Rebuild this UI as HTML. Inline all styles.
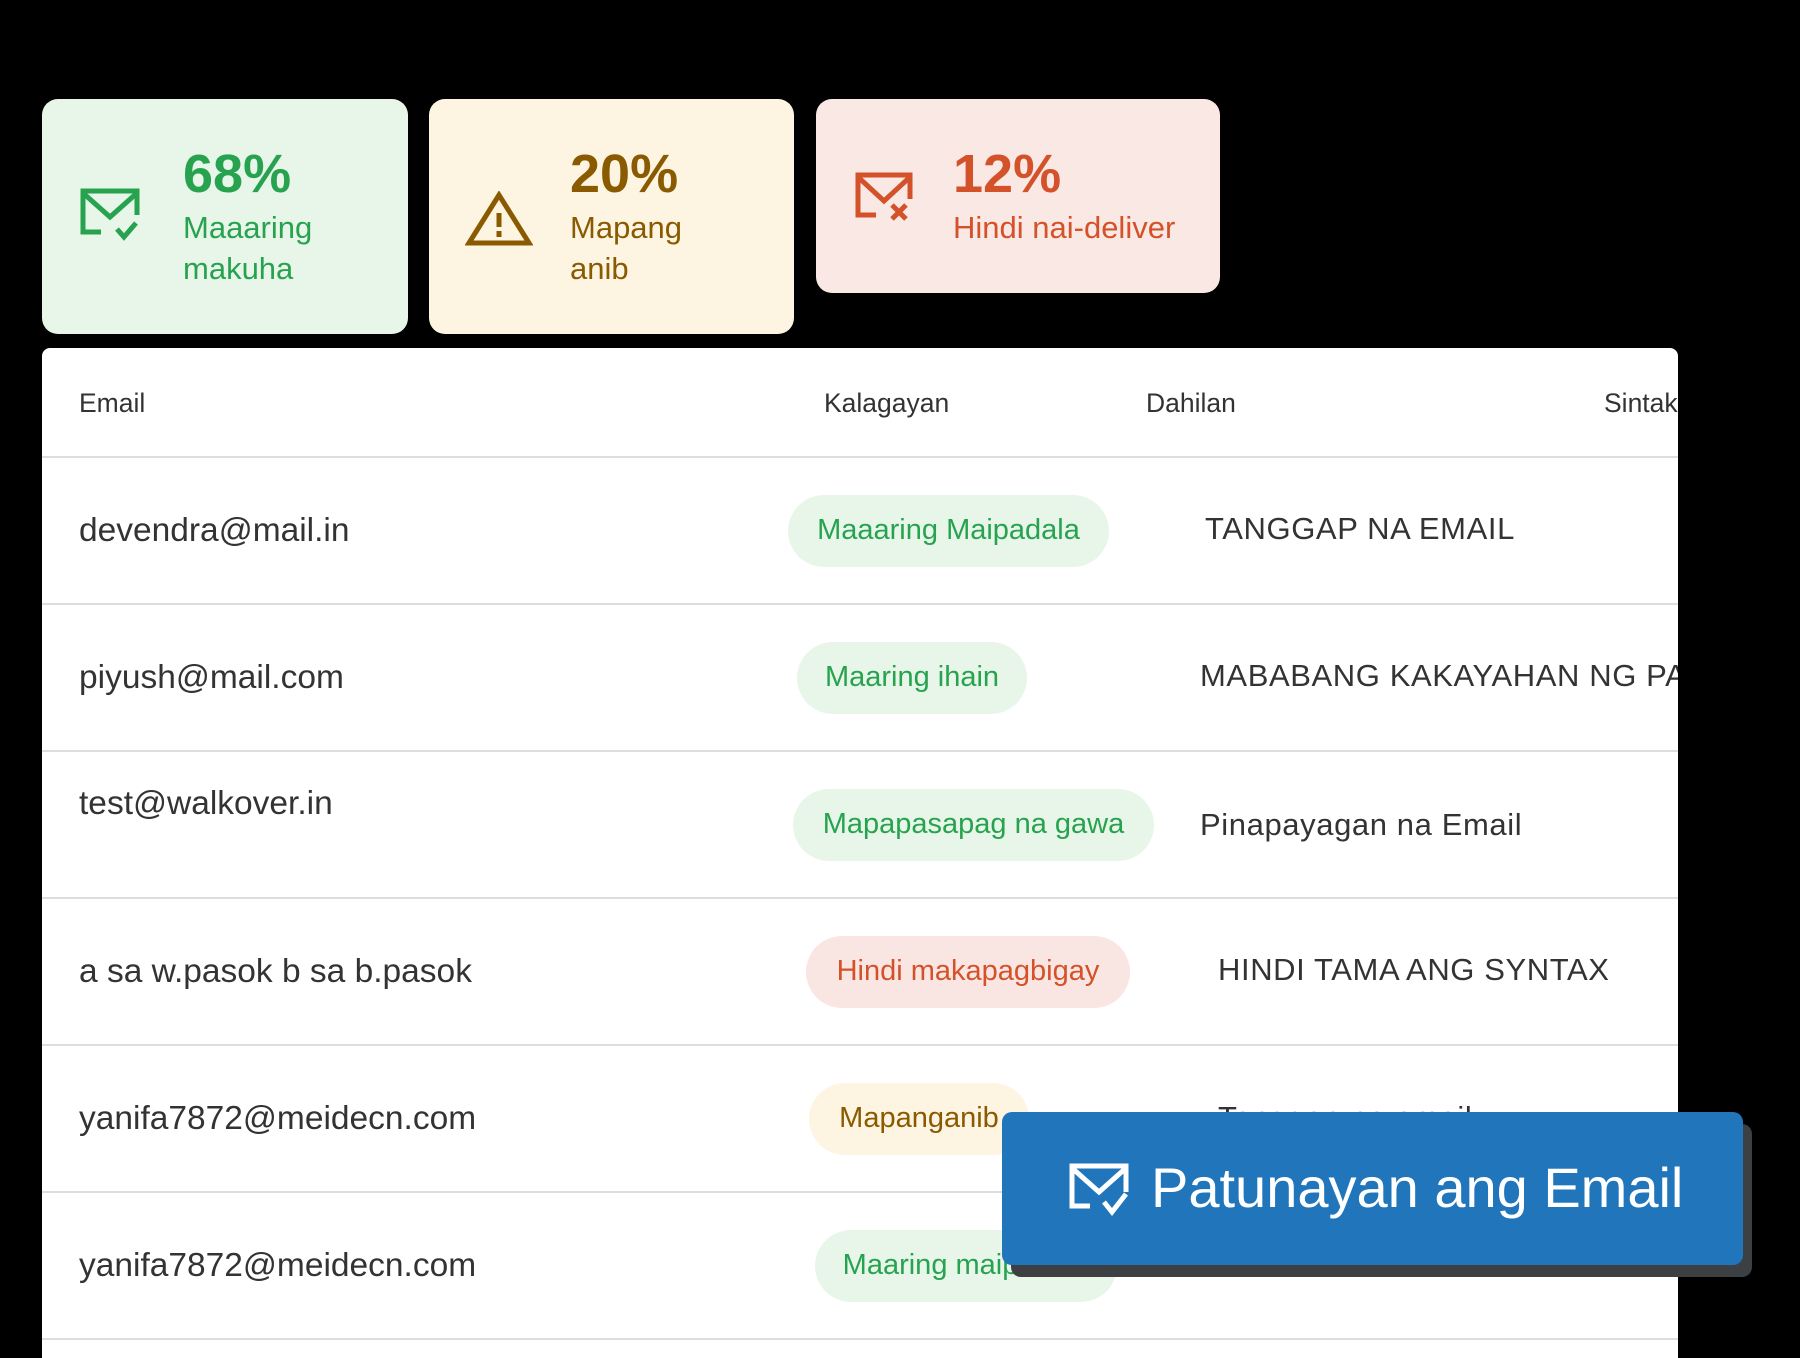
<!DOCTYPE html>
<html><head><meta charset="utf-8"><style>
*{margin:0;padding:0;box-sizing:border-box}
body{width:1800px;height:1350px;background:#000;position:relative;overflow:hidden;font-family:"Liberation Sans",sans-serif}
.card{position:absolute;border-radius:16px}
.card svg{position:absolute}
.pct{position:absolute;font-weight:bold;font-size:54px;line-height:54px}
.lbl{position:absolute;font-size:31px;line-height:41px}
.table{position:absolute;left:42px;top:348px;width:1636px;height:1010px;background:#fff;border-radius:8px 8px 0 0;overflow:hidden}
.hd{position:absolute;font-size:26.5px;color:#333;top:40px}
.line{position:absolute;left:0;width:100%;height:2px;background:#dcdde0}
.em{position:absolute;left:37px;font-size:33.5px;color:#333}
.pill{position:absolute;height:72px;border-radius:36px;font-size:29px;line-height:70px;text-align:center;white-space:nowrap}
.g{background:#e8f6e9;color:#27a350}
.r{background:#f9e6e2;color:#d4522a}
.y{background:#fdf4e2;color:#8a5a00}
.dh{position:absolute;font-size:31px;color:#333;letter-spacing:0.6px;white-space:nowrap}
</style></head><body>
<div class="card" style="left:42px;top:99px;width:366px;height:235px;background:#e8f6e9">
<svg style="left:37px;top:88px" width="66" height="56" viewBox="0 0 66 56"><path d="M22 45H4V4h54v24M4 6l27 24 27-24" fill="none" stroke="#27a350" stroke-width="5"/><path d="M38 42l7 8 12-14" fill="none" stroke="#27a350" stroke-width="5"/></svg>
<div class="pct" style="left:141px;top:48px;color:#27a350">68%</div>
<div class="lbl" style="left:141px;top:108px;color:#27a350">Maaaring<br>makuha</div></div>
<div class="card" style="left:429px;top:99px;width:365px;height:235px;background:#fdf4e2">
<svg style="left:36px;top:92px" width="68" height="56" viewBox="0 0 68 56"><path d="M34 4L4 52h60z" fill="none" stroke="#8a5a00" stroke-width="5"/><path d="M34 22v14M34 40v6" stroke="#8a5a00" stroke-width="5"/></svg>
<div class="pct" style="left:141px;top:48px;color:#8a5a00">20%</div>
<div class="lbl" style="left:141px;top:108px;color:#8a5a00">Mapang<br>anib</div></div>
<div class="card" style="left:816px;top:99px;width:404px;height:194px;background:#f9e8e4">
<svg style="left:38px;top:72px" width="62" height="56" viewBox="0 0 62 56"><path d="M22 44H4V4h52v24M4 6l26 24 26-24" fill="none" stroke="#d4522a" stroke-width="5"/><path d="M38 34l14 14M52 34L38 48" stroke="#d4522a" stroke-width="5"/></svg>
<div class="pct" style="left:137px;top:48px;color:#d4522a">12%</div>
<div class="lbl" style="left:137px;top:108px;color:#d4522a">Hindi nai-deliver</div></div>

<div class="table">
<div class="hd" style="left:37px">Email</div>
<div class="hd" style="left:782px">Kalagayan</div>
<div class="hd" style="left:1104px">Dahilan</div>
<div class="hd" style="left:1562px">Sintaks</div>
<div class="line" style="top:108px"></div>
<div class="line" style="top:255px"></div>
<div class="line" style="top:402px"></div>
<div class="line" style="top:549px"></div>
<div class="line" style="top:696px"></div>
<div class="line" style="top:843px"></div>
<div class="line" style="top:990px"></div>
<div class="em" style="top:164px">devendra@mail.in</div>
<div class="em" style="top:311px">piyush@mail.com</div>
<div class="em" style="top:437px">test@walkover.in</div>
<div class="em" style="top:605px">a sa w.pasok b sa b.pasok</div>
<div class="em" style="top:752px">yanifa7872@meidecn.com</div>
<div class="em" style="top:899px">yanifa7872@meidecn.com</div>
<div class="pill g" style="left:746px;top:147px;width:321px">Maaaring Maipadala</div>
<div class="pill g" style="left:755px;top:294px;width:230px">Maaring ihain</div>
<div class="pill g" style="left:751px;top:441px;width:361px">Mapapasapag na gawa</div>
<div class="pill r" style="left:764px;top:588px;width:324px">Hindi makapagbigay</div>
<div class="pill y" style="left:767px;top:735px;width:220px">Mapanganib</div>
<div class="pill g" style="left:773px;top:882px;width:302px">Maaring maipadala</div>
<div class="dh" style="left:1163px;top:163px">TANGGAP NA EMAIL</div>
<div class="dh" style="left:1158px;top:310px">MABABANG KAKAYAHAN NG PAGHAHATID</div>
<div class="dh" style="left:1158px;top:459px">Pinapayagan na Email</div>
<div class="dh" style="left:1176px;top:604px">HINDI TAMA ANG SYNTAX</div>
<div class="dh" style="left:1176px;top:752px">Tanggap na email</div>
<div class="dh" style="left:1240px;top:898px">TANGGAP NA EMAIL</div>
</div>

<div style="position:absolute;left:1011px;top:1124px;width:741px;height:153px;background:#3d4043;border-radius:10px"></div>
<div style="position:absolute;left:1002px;top:1112px;width:741px;height:153px;background:#2075bb;border-radius:10px">
<svg style="position:absolute;left:66px;top:50px" width="64" height="56" viewBox="0 0 64 56"><path d="M22 44H4V4h54v26M4 6l27 24 27-24" fill="none" stroke="#fff" stroke-width="5"/><path d="M36 40l8 10 14-18" fill="none" stroke="#fff" stroke-width="5"/></svg>
<div style="position:absolute;left:149px;top:44px;font-size:56px;line-height:64px;color:#fff">Patunayan ang Email</div>
</div>
</body></html>
